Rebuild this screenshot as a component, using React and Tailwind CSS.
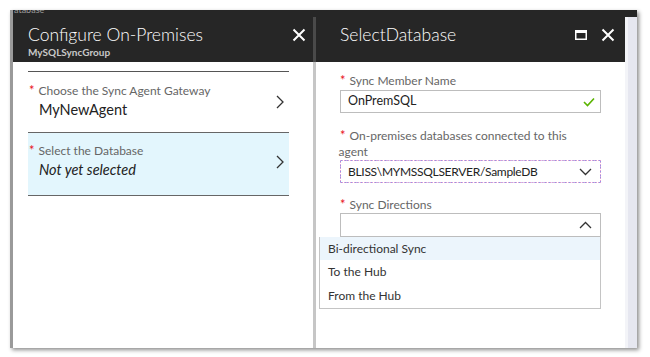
import React from 'react';

const font = { fontFamily: '"Lato", "Open Sans", sans-serif' };

const CloseIcon = () => (
  <svg width="14" height="14" viewBox="0 0 14 14" className="text-white">
    <path d="M1.5 1.5 L12.5 12.5 M12.5 1.5 L1.5 12.5" stroke="currentColor" strokeWidth="2" fill="none" />
  </svg>
);

const Chevron = ({ dir = 'right' }) => {
  const paths = {
    right: 'M1 1 L7 7 L1 13',
    down: 'M1 1 L6.5 6.5 L12 1',
    up: 'M1 7 L6.5 1.5 L12 7',
  };
  const size = dir === 'right' ? { w: 9, h: 14, vb: '0 0 9 14' } : { w: 13, h: 8, vb: '0 0 13 8' };
  return (
    <svg width={size.w} height={size.h} viewBox={size.vb} className="text-[#333]">
      <path d={paths[dir]} stroke="currentColor" strokeWidth="1.3" fill="none" />
    </svg>
  );
};

const Label = ({ children }) => (
  <div className="flex items-start text-[12px] leading-[16px] text-[#666]">
    <span className="text-[#e81123] text-[13px] mr-[4px] leading-[14px]">*</span>
    <span>{children}</span>
  </div>
);

const App = () => {
  return (
    <div className="w-[650px] h-[357px] bg-white pt-[10px] pl-[10px] overflow-hidden" style={font}>
      <div className="flex w-[627px] h-[338px] border-l-[3px] border-l-[#9a9a9a] shadow-[2px_2px_4px_rgba(0,0,0,0.45)]">
        {/* Left panel */}
        <div className="w-[300px] flex flex-col bg-white">
          <div className="h-[52px] bg-[#262626]">
            <div className="h-[4px] overflow-hidden">
              <div className="text-[9px] leading-[9px] text-[#9a9a9a] pl-[1px] -mt-[5px]">atabase</div>
            </div>
            <div className="flex justify-between items-start pl-[15px] pr-[7px] pt-[10px]">
              <div>
                <div className="text-[17.5px] leading-[22px] text-white font-light">Configure On-Premises</div>
                <div className="text-[10px] leading-[12px] text-[#c8c8c8] font-bold">MySQLSyncGroup</div>
              </div>
              <div className="pt-[4px]"><CloseIcon /></div>
            </div>
          </div>
          <div className="pl-[15px] pr-[24px] pt-[9px]">
            <div className="border-t border-[#555]">
              <div className="flex items-center justify-between pl-[1px] pr-[4px] pt-[11px] pb-[12px]">
                <div>
                  <Label>Choose the Sync Agent Gateway</Label>
                  <div className="pl-[10px] text-[14.5px] leading-[21px] text-[#222]">MyNewAgent</div>
                </div>
                <Chevron />
              </div>
            </div>
            <div className="border-y border-[#666] bg-[#e3f6fd]">
              <div className="flex items-center justify-between pl-[1px] pr-[4px] pt-[10px] pb-[15px]">
                <div>
                  <Label>Select the Database</Label>
                  <div className="pl-[10px] text-[14.5px] leading-[21px] text-[#222] italic">Not yet selected</div>
                </div>
                <Chevron />
              </div>
            </div>
          </div>
        </div>

        {/* Divider */}
        <div className="w-[3px] flex flex-col">
          <div className="h-[52px] bg-[linear-gradient(#262626_0_7px,#4a4a4a_7px)]" />
          <div className="flex-1 bg-[#c6c6c6]" />
        </div>

        {/* Right panel */}
        <div className="w-[309px] flex flex-col bg-white">
          <div className="h-[52px] bg-[#262626] flex justify-between items-start pl-[24px] pr-[10px] pt-[14px]">
            <div className="text-[17.5px] leading-[22px] text-white font-light">SelectDatabase</div>
            <div className="flex items-center gap-[14px] pt-[4px]">
              <svg width="12" height="10" viewBox="0 0 12 10">
                <rect x="0.75" y="0.75" width="10.5" height="8.5" fill="none" stroke="white" strokeWidth="1.5" />
                <rect x="0" y="0" width="12" height="3" fill="white" />
              </svg>
              <CloseIcon />
            </div>
          </div>
          <div className="pl-[24px] pr-[24px] pt-[11px]">
            <Label>Sync Member Name</Label>
            <div className="mt-[1px] h-[23px] border border-[#bdbdbd] flex items-center justify-between pl-[7px] pr-[5px]">
              <span className="text-[12.5px] text-[#222]">OnPremSQL</span>
              <svg width="12" height="10" viewBox="0 0 12 10">
                <path d="M1 5 L4.5 8.5 L11 1.5" stroke="#5ab400" strokeWidth="1.6" fill="none" />
              </svg>
            </div>

            <div className="mt-[15px]">
              <Label>On-premises databases connected to this<br /><span className="-ml-[11px]">agent</span></Label>
            </div>
            <div className="h-[23px] border border-dashed border-[#8a9be8] outline outline-1 outline-dotted outline-[#e59ad0] -outline-offset-1 flex items-center justify-between pl-[7px] pr-[8px]">
              <span className="text-[12px] tracking-[-0.3px] text-[#222]">BLISS\MYMSSQLSERVER/SampleDB</span>
              <Chevron dir="down" />
            </div>

            <div className="mt-[14px]">
              <Label>Sync Directions</Label>
            </div>
            <div className="h-[24px] border border-[#bdbdbd] flex items-center justify-end pr-[8px]">
              <Chevron dir="up" />
            </div>
          </div>
          <div className="ml-[3px] mr-[24px] border border-[#c4c4c4] border-t-0 text-[12px] text-[#333]">
            <div className="h-[23px] bg-[#ecf5fc] flex items-center pl-[8px]">Bi-directional Sync</div>
            <div className="h-[24px] flex items-center pl-[8px]">To the Hub</div>
            <div className="h-[24px] flex items-center pl-[8px]">From the Hub</div>
          </div>
        </div>

        {/* Scroll strip */}
        <div className="w-[12px] flex flex-col">
          <div className="h-[7px] bg-[#262626]" />
          <div className="flex-1 bg-[#e6e7f0] border-l-[3px] border-l-[#f3f4f8]" />
        </div>
      </div>
    </div>
  );
};

export default App;
